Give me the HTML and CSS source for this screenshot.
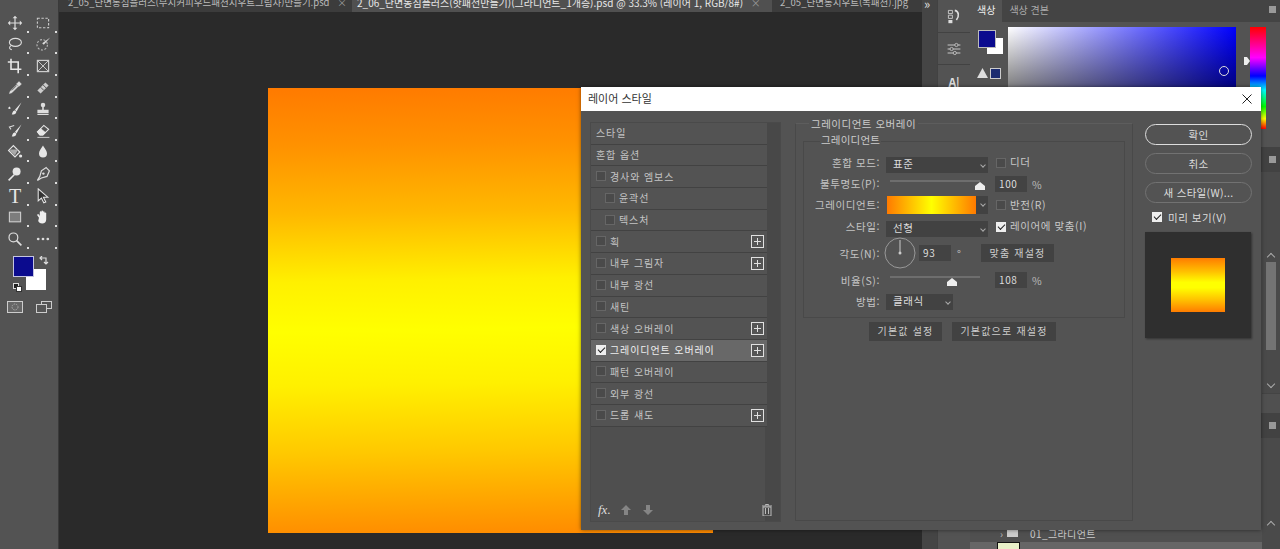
FILE: index.html
```html
<!DOCTYPE html>
<html lang="ko">
<head>
<meta charset="utf-8">
<title>레이어 스타일</title>
<link rel="stylesheet" href="styles.css">
</head>
<body>
<div class="app">
  <aside class="tools">
    <div class="tool-grid">
      <span class="tool"><svg class="ic" viewBox="0 0 20 20"><path d="M10 3v14M3 10h14" stroke="#ddd" stroke-width="1.500"/><path d="M10 1l-3 3h6zM10 19l-3-3h6zM1 10l3-3v6zM19 10l-3-3v6z" fill="#ddd"/></svg></span>
      <span class="tool"><svg class="ic" viewBox="0 0 20 20"><rect x="3" y="4" width="14" height="12" fill="none" stroke="#ccc" stroke-width="1.400" stroke-dasharray="3 2"/></svg></span>
      <span class="tool"><svg class="ic" viewBox="0 0 20 20"><ellipse cx="10.500" cy="8" rx="7.500" ry="5" fill="none" stroke="#ddd" stroke-width="1.400"/><path d="M5 12c-3 2-2 5 1 5" fill="none" stroke="#ddd" stroke-width="1.400"/></svg></span>
      <span class="tool"><svg class="ic" viewBox="0 0 20 20"><circle cx="9" cy="11" r="6.500" fill="none" stroke="#bbb" stroke-width="1.400" stroke-dasharray="2.500 2"/><path d="M19 2l-8 9-2-2z" fill="#ddd"/></svg></span>
      <span class="tool"><svg class="ic" viewBox="0 0 20 20"><path d="M5 1v13h13M1 5h13v14" fill="none" stroke="#e6e6e6" stroke-width="2"/></svg></span>
      <span class="tool"><svg class="ic" viewBox="0 0 20 20"><rect x="3" y="3" width="14" height="14" fill="none" stroke="#ccc" stroke-width="1.500"/><path d="M3 3l14 14M17 3L3 17" stroke="#ccc" stroke-width="1.200"/></svg></span>
      <span class="tool"><svg class="ic" viewBox="0 0 20 20"><path d="M15 2l3 3-3 3-3-3zM12 6l2 2-8 8-3 1 1-3z" fill="#ddd" stroke="#ddd" stroke-width=".6"/><path d="M6 13l6-6" stroke="#555"/></svg></span>
      <span class="tool"><svg class="ic" viewBox="0 0 20 20"><path d="M3 13L13 3l4 4L7 17z" fill="#ccc"/><path d="M7 9l4 4M10 6l4 4" stroke="#555" stroke-width="1.200"/></svg></span>
      <span class="tool"><svg class="ic" viewBox="0 0 20 20"><path d="M18 2l-8 9 2 2zM10 12c-3 0-3 3-4 5 3 0 6-1 5.500-4z" fill="#e6e6e6"/><path d="M3 7c-2 2-2 3 0 3s2-1 0-3z" fill="#e6e6e6"/></svg></span>
      <span class="tool"><svg class="ic" viewBox="0 0 20 20"><circle cx="10" cy="5" r="2.800" fill="#ddd"/><path d="M9 7h2v4H9zM3 11h14v4H3zM3 16h14v1.500H3z" fill="#ddd"/></svg></span>
      <span class="tool"><svg class="ic" viewBox="0 0 20 20"><path d="M18 2l-8 9 2 2zM10 12c-3 0-3 3-4 5 3 0 6-1 5.500-4z" fill="#e6e6e6"/><path d="M9 3L3 5l2 3" fill="none" stroke="#ddd" stroke-width="1.300"/></svg></span>
      <span class="tool"><svg class="ic" viewBox="0 0 20 20"><path d="M3 11l8-8 6 5-7 7H6z" fill="none" stroke="#e6e6e6" stroke-width="1.400"/><path d="M3 11l4-4 6 5-3 3H6zM3 18h15" fill="#e6e6e6" stroke="#e6e6e6"/></svg></span>
      <span class="tool"><svg class="ic" viewBox="0 0 20 20"><path d="M8 2l8 8-6 6-8-8z" fill="none" stroke="#e6e6e6" stroke-width="1.500"/><path d="M4 7h10l-4 7-6-5z" fill="#aaa"/><circle cx="17" cy="15" r="2" fill="#e6e6e6"/></svg></span>
      <span class="tool"><svg class="ic" viewBox="0 0 20 20"><path d="M10 2c3 5 5 7 5 10a5 5 0 0 1-10 0c0-3 2-5 5-10z" fill="#e6e6e6"/></svg></span>
      <span class="tool"><svg class="ic" viewBox="0 0 20 20"><circle cx="12" cy="7" r="5" fill="#e6e6e6"/><path d="M9 11l-7 7" stroke="#e6e6e6" stroke-width="2"/></svg></span>
      <span class="tool"><svg class="ic" viewBox="0 0 20 20"><path d="M14 2l4 4-3 7-7 2-5 3 3-5 2-7z" fill="none" stroke="#ddd" stroke-width="1.500"/><circle cx="10.500" cy="9.500" r="1.500" fill="#ddd"/></svg></span>
      <span class="tool type-tool">T</span>
      <span class="tool"><svg class="ic" viewBox="0 0 20 20"><path d="M4 1v15l4-3.500 3 6 2.500-1-3-6H16z" fill="#333" stroke="#e6e6e6" stroke-width="1.300"/></svg></span>
      <span class="tool"><svg class="ic" viewBox="0 0 20 20"><rect x="3" y="4" width="14" height="12" fill="#7d7d7d" stroke="#ccc" stroke-width="1.400"/></svg></span>
      <span class="tool"><svg class="ic" viewBox="0 0 20 20"><path d="M5 11L3 8c-1-1 1-2 2-1l1 2V4c0-1.500 2-1.500 2 0V3c0-1.500 2-1.500 2 0v1c0-1.500 2-1.500 2 0v1c0-1 2-1 2 0v8c0 3-2 5-5 5s-4-1-5-3z" fill="#eee"/></svg></span>
      <span class="tool"><svg class="ic" viewBox="0 0 20 20"><circle cx="8" cy="8" r="5.500" fill="none" stroke="#ddd" stroke-width="1.500"/><path d="M12 12l6 6" stroke="#ddd" stroke-width="2"/></svg></span>
      <span class="tool"><svg class="ic" viewBox="0 0 20 20"><circle cx="4" cy="10" r="1.700" fill="#ddd"/><circle cx="10" cy="10" r="1.700" fill="#ddd"/><circle cx="16" cy="10" r="1.700" fill="#ddd"/></svg></span>
    </div>
    <div class="colors">
      <span class="bg-chip"></span>
      <span class="fg-chip"></span>
      <svg class="swap" viewBox="0 0 10 10"><path d="M1 2h6v6M3 0L1 2l2 2M5 6l2 2 2-2" fill="none" stroke="#ddd" stroke-width="1.200"/></svg>
      <span class="mini-back"></span>
      <span class="mini-front"></span>
    </div>
    <div class="tool-foot">
      <svg class="foot-ic" viewBox="0 0 16 12"><rect x=".5" y=".5" width="15" height="11" fill="#666" stroke="#ccc"/><circle cx="8" cy="6" r="3" fill="none" stroke="#aaa" stroke-dasharray="1.500 1"/></svg>
      <svg class="foot-ic" viewBox="0 0 16 12"><rect x="5.500" y=".5" width="10" height="7" fill="none" stroke="#ccc"/><rect x=".5" y="3.500" width="10" height="8" fill="#555" stroke="#ccc"/></svg>
    </div>
  </aside>

  <main class="doc">
    <div class="tabs">
      <span class="tab tab-one">2_05_단면동심플러스(무지커피우드패션지우트그림자)만들기.psd <i>×</i></span>
      <span class="tab tab-active">2_06_단면동심플러스(핫패션만들기)(그라디언트_1개층).psd @ 33.3% (레이어 1, RGB/8#) <i>×</i></span>
      <span class="tab tab-three">2_05_단면동지우트(녹패션).jpg</span>
    </div>
    <div class="stage"><div class="canvas"></div></div>
  </main>

  <aside class="dock">
    <div class="gutter"><span class="tab-more">»</span></div>
    <div class="strip">
      <div class="strip-cell">
        <svg class="strip-ic" viewBox="0 0 20 20"><path d="M3 3h5v4H3zM3 9h5v4H3z" fill="none" stroke="#ddd"/><path d="M3 15h5v4H3z" fill="#ddd"/><path d="M11 3c5 1 6 7 2 12" fill="none" stroke="#ddd" stroke-width="2"/></svg>
      </div>
      <div class="strip-cell">
        <svg class="strip-ic" viewBox="0 0 20 20"><path d="M2 5h16M2 10h16M2 15h16" stroke="#ccc" stroke-width="1.200"/><circle cx="13" cy="5" r="2" fill="#555" stroke="#ccc"/><circle cx="7" cy="10" r="2" fill="#555" stroke="#ccc"/><circle cx="11" cy="15" r="2" fill="#555" stroke="#ccc"/></svg>
      </div>
      <div class="strip-cell strip-text">A|</div>
    </div>
    <div class="panels">
      <section class="color-panel">
        <div class="panel-tabs">
          <span class="ptab ptab-on">색상</span>
          <span class="ptab">색상 견본</span>
          <span class="grip"></span>
        </div>
        <div class="color-body">
          <div class="swatches">
            <span class="sw-bg"></span>
            <span class="sw-fg"></span>
            <svg class="warn" viewBox="0 0 12 11"><path d="M6 0l6 11H0z" fill="#ddd"/></svg>
            <span class="sw-web"></span>
          </div>
          <div class="picker"><span class="picker-dot"></span></div>
          <svg class="hue-arrow" viewBox="0 0 6 8"><path d="M0 0h3l3 4-3 4H0z" fill="#eee"/></svg>
          <div class="hue"></div>
        </div>
      </section>
      <section class="band"><span class="grip"></span></section>
      <section class="upper">
        <div class="upper-scroll">
          <span class="chevron chevron-up"></span>
          <span class="vthumb"></span>
          <span class="chevron chevron-down"></span>
        </div>
      </section>
      <section class="band"><span class="grip"></span></section>
      <section class="lower">
        <div class="layer-list">
          <div class="layer-row"><span class="chev">›</span><span class="folder"></span><span>01_그라디언트</span></div>
          <div class="layer-next"><span class="layer-thumb"></span></div>
        </div>
        <div class="lower-scroll"><span class="chevron chevron-up"></span></div>
      </section>
    </div>
  </aside>
</div>

<div class="dialog">
  <header class="titlebar">
    <span>레이어 스타일</span>
    <svg class="close" viewBox="0 0 10 10"><path d="M.5.5l9 9M9.500.5l-9 9" stroke="#222" stroke-width="1"/></svg>
  </header>
  <div class="dlg-body">
    <div class="styles-col">
      <div class="style-list">
        <div class="row">스타일</div>
        <div class="row">혼합 옵션</div>
        <div class="row"><span class="cb"></span>경사와 엠보스</div>
        <div class="row sub"><span class="cb"></span>윤곽선</div>
        <div class="row sub"><span class="cb"></span>텍스처</div>
        <div class="row"><span class="cb"></span>획<span class="plus"></span></div>
        <div class="row"><span class="cb"></span>내부 그림자<span class="plus"></span></div>
        <div class="row"><span class="cb"></span>내부 광선</div>
        <div class="row"><span class="cb"></span>새틴</div>
        <div class="row"><span class="cb"></span>색상 오버레이<span class="plus"></span></div>
        <div class="row row-on"><span class="cb cb-on"></span>그레이디언트 오버레이<span class="plus"></span></div>
        <div class="row"><span class="cb"></span>패턴 오버레이</div>
        <div class="row"><span class="cb"></span>외부 광선</div>
        <div class="row"><span class="cb"></span>드롭 섀도<span class="plus"></span></div>
      </div>
      <div class="list-foot">
        <span class="fx">fx<b>.</b></span>
        <svg class="arrow" viewBox="0 0 10 10"><path d="M5 0l5 5H7v5H3V5H0z" fill="#858585"/></svg>
        <svg class="arrow" viewBox="0 0 10 10"><path d="M5 10l5-5H7V0H3v5H0z" fill="#858585"/></svg>
        <svg class="trash" viewBox="0 0 10 12"><path d="M3.500 1.500V.5h3v1M0 2h10M1 3h8v9H1z" fill="none" stroke="#bbb"/><path d="M3.500 4v6M6.500 4v6" stroke="#bbb"/></svg>
      </div>
    </div>

    <div class="settings">
      <div class="head">그레이디언트 오버레이</div>
      <div class="group">
        <div class="legend">그레이디언트</div>
        <div class="f f1">
          <label>혼합 모드:</label>
          <div class="sel sel-wide">표준<em></em></div>
          <span class="cb cb-form"></span><span class="chk-label">디더</span>
        </div>
        <div class="f f2">
          <label>불투명도(P):</label>
          <div class="slider"><span class="thumb thumb-full"></span></div>
          <div class="num">100</div><span class="unit">%</span>
        </div>
        <div class="f f3">
          <label>그레이디언트:</label>
          <div class="grad-pick"><span class="grad"></span><span class="grad-btn"><em></em></span></div>
          <span class="cb cb-form"></span><span class="chk-label">반전(R)</span>
        </div>
        <div class="f f4">
          <label>스타일:</label>
          <div class="sel sel-wide">선형<em></em></div>
          <span class="cb cb-form cb-on"></span><span class="chk-label">레이어에 맞춤(I)</span>
        </div>
        <div class="f f5">
          <label>각도(N):</label>
          <svg class="dial" viewBox="0 0 32 32"><circle cx="16" cy="16" r="15" fill="none" stroke="#999"/><path d="M16 16V3" stroke="#ccc"/><circle cx="16" cy="16" r="1.500" fill="#ccc"/></svg>
          <div class="num num-angle">93</div><span class="deg">°</span>
          <div class="btn btn-fit">맞춤 재설정</div>
        </div>
        <div class="f f6">
          <label>비율(S):</label>
          <div class="slider"><span class="thumb thumb-scale"></span></div>
          <div class="num">108</div><span class="unit">%</span>
        </div>
        <div class="f f7">
          <label>방법:</label>
          <div class="sel sel-narrow">클래식<em></em></div>
        </div>
      </div>
      <div class="defaults">
        <div class="btn btn-a">기본값 설정</div>
        <div class="btn btn-b">기본값으로 재설정</div>
      </div>
    </div>

    <div class="actions">
      <div class="pill pill-main">확인</div>
      <div class="pill">취소</div>
      <div class="pill pill-last">새 스타일(W)...</div>
      <div class="preview-check"><span class="cb cb-on"></span>미리 보기(V)</div>
      <div class="preview"><span class="preview-swatch"></span></div>
    </div>
  </div>
</div>
</body>
</html>
```
FILE: styles.css
```css
* { box-sizing: border-box; }
html, body { margin: 0; height: 100%; overflow: hidden; }
body {
  background: #2a2a2a;
  color: #d8d8d8;
  font: 11px "Noto Sans CJK KR", "Noto Sans", sans-serif;
}
.app { display: flex; height: 549px; width: 1280px; }

/* Toolbar */
.tools { width: 59px; flex: none; background: #535353; border-right: 1px solid #3a3a3a; padding-top: 12px; }
.tool-grid { display: grid; grid-template-columns: 28px 28px; grid-auto-rows: 21.6px; justify-items: center; align-items: center; padding-left: 1px; }
.tool { position: relative; display: block; width: 16px; height: 16px; }
.tool::after { content: ""; position: absolute; right: -6px; bottom: -2px; width: 2px; height: 2px; background: #ddd; }
.ic { width: 16px; height: 16px; display: block; }
.type-tool { font: 20px/16px "Liberation Serif", serif; color: #e6e6e6; text-align: center; }
.colors { position: relative; height: 45px; margin-top: 6.4px; }
.bg-chip { position: absolute; left: 26px; top: 13px; width: 20px; height: 21px; background: #fff; }
.fg-chip { position: absolute; left: 13px; top: 0; width: 21px; height: 21px; background: #0b0b8e; border: 1px solid #c4c4e0; }
.swap { position: absolute; left: 39px; top: 0; width: 10px; height: 10px; }
.mini-back { position: absolute; left: 13px; top: 27px; width: 6px; height: 6px; background: #222; border: 1px solid #ddd; }
.mini-front { position: absolute; left: 16px; top: 30px; width: 6px; height: 6px; background: #fff; border: 1px solid #333; }
.tool-foot { display: flex; gap: 13px; padding-left: 7px; }
.foot-ic { width: 16px; height: 12px; display: block; }

/* Document */
.doc { width: 863px; flex: none; display: flex; flex-direction: column; background: #2a2a2a; }
.tabs { height: 19px; margin-top: -7px; display: flex; background: #3c3c3c; white-space: nowrap; overflow: hidden; font-size: 9.500px; line-height: 19px; color: #bbb; flex: none; }
.tab { height: 19px; overflow: hidden; flex: none; padding-left: 9px; }
.tab-one { width: 293px; }
.tab-active { width: 420px; background: #505050; color: #e8e8e8; padding-left: 5px; font-size: 10px; }
.tab-three { width: 150px; padding-left: 8px; }
.tab i { font-style: normal; color: #999; margin-left: 5px; }
.stage { flex: 1; padding: 76px 0 0 209px; }
.canvas { width: 445px; height: 445px; background: linear-gradient(179deg, #ff7a00 0%, #ff9200 13%, #ffb800 28%, #fff000 43%, #ffff00 54%, #fff000 66%, #ffc800 81%, #ff9a00 95%, #ff8a00 100%); }

/* Dock */
.dock { flex: 1; display: flex; background: #454545; }
.gutter { width: 15px; flex: none; }
.tab-more { display: block; color: #ddd; font-size: 13px; line-height: 8px; padding-left: 2px; }
.strip { width: 33px; flex: none; background: #535353; border-left: 1px solid #424242; }
.strip-cell { height: 32px; display: flex; align-items: center; justify-content: center; border-bottom: 1px solid #424242; }
.strip-cell:first-child { height: 33px; }
.strip-ic { width: 16px; height: 16px; }
.strip-text { color: #ddd; font-size: 12px; font-weight: bold; border: 0; }
.panels { flex: 1; display: flex; flex-direction: column; background: #424242; }
.color-panel { height: 147px; background: #535353; flex: none; }
.panel-tabs { height: 22px; display: flex; background: #444; align-items: center; position: relative; }
.ptab { padding: 0 7px; height: 22px; line-height: 20px; color: #aaa; font-size: 10px; }
.ptab-on { background: #535353; color: #eee; }
.grip { position: absolute; right: 4px; top: 6px; width: 7px; height: 7px; background: #999; }
.color-body { position: relative; height: 125px; }
.swatches { position: absolute; left: 0; top: 0; width: 36px; height: 66px; }
.sw-bg { position: absolute; left: 17px; top: 16px; width: 16px; height: 16px; background: #fff; }
.sw-fg { position: absolute; left: 8px; top: 8px; width: 18px; height: 18px; background: #0b0b8e; border: 1px solid #bbb; }
.warn { position: absolute; left: 7px; top: 46px; width: 11px; height: 10px; }
.sw-web { position: absolute; left: 20px; top: 46px; width: 11px; height: 11px; background: #1c2c70; border: 1px solid #ccc; }
.picker { position: absolute; left: 38px; top: 5px; width: 228px; height: 120px; background: linear-gradient(to bottom, transparent, #000), linear-gradient(to right, #fff, #0000ff); }
.picker-dot { position: absolute; left: 211px; top: 39px; width: 10px; height: 10px; border: 1px solid #ddd; border-radius: 50%; }
.hue-arrow { position: absolute; left: 274px; top: 35px; width: 6px; height: 8px; }
.hue { position: absolute; left: 280px; top: 5px; width: 16px; height: 102px; background: linear-gradient(to bottom, #f00, #f0f 30%, #00f 48%, #0ff 62%, #0f0 78%, #ff0 90%, #f00); }
.band { height: 25px; flex: none; background: #424242; position: relative; }
.band .grip { top: 9px; }
.upper { height: 241px; flex: none; background: #505050; display: flex; justify-content: flex-end; }
.upper-scroll { width: 18px; height: 222px; border-bottom: 1px solid #444; background: #4a4a4a; padding-top: 80px; display: flex; flex-direction: column; align-items: center; }
.vthumb { width: 10px; height: 88px; flex: none; background: #747474; margin-top: 2px; }
.chevron { width: 6px; height: 6px; flex: none; border-left: 1px solid #aaa; border-top: 1px solid #aaa; }
.chevron-up { transform: rotate(45deg); margin-top: 2px; }
.chevron-down { transform: rotate(225deg); margin-top: 31px; }
.lower { flex: 1; background: #505050; display: flex; }
.layer-list { flex: 1; padding-top: 86px; }
.layer-row { display: flex; align-items: center; height: 18px; font-size: 10px; padding-left: 30px; color: #ccc; letter-spacing: .4px; }
.chev { color: #bbb; width: 7px; }
.folder { width: 11px; height: 8px; background: #ccc; margin-right: 12px; }
.layer-next { height: 20px; background: #666; padding-left: 27px; }
.layer-thumb { display: block; width: 23px; height: 20px; background: #e8f0c8; border: 1px solid #111; }
.lower-scroll { width: 18px; flex: none; background: #4a4a4a; padding-top: 82px; display: flex; justify-content: center; }

/* Dialog */
.dialog { position: absolute; left: 581px; top: 87px; width: 680px; height: 443px; background: #535353; box-shadow: 0 0 4px rgba(0,0,0,.5); }
.titlebar { height: 24px; background: #fff; color: #333; font-size: 11px; line-height: 20px; display: flex; align-items: center; justify-content: space-between; padding: 0 9px 2px 7px; }
.close { width: 10px; height: 10px; display: block; margin-top: 2px; }
.dlg-body { display: flex; padding: 11px 9px 8px 9px; height: 419px; }
.styles-col { width: 191px; flex: none; border: 1px solid #4a4a4a; display: flex; flex-direction: column; background: #4f4f4f linear-gradient(to left, #484848 15px, transparent 15px); }
.style-list { width: 176px; flex: 1; }
.row { height: 21.7px; display: flex; align-items: center; padding: 0 0 1px 5px; border-bottom: 1px solid #424242; background: #535353; font-size: 10px; letter-spacing: .9px; color: #c4c4c4; position: relative; }
.sub { padding-left: 14px; }
.row-on { background: #686868; color: #eee; }
.cb { width: 10px; height: 10px; flex: none; background: #4a4a4a; border: 1px solid #666; margin-right: 4px; position: relative; }
.cb-on { background: #eee; border-color: #eee; }
.cb-on::after { content: ""; position: absolute; left: 1px; top: 1px; width: 6px; height: 3px; border-left: 1.500px solid #222; border-bottom: 1.500px solid #222; transform: rotate(-45deg); }
.plus { position: absolute; right: 3px; top: 4px; width: 13px; height: 13px; border: 1px solid #e0e0e0; background: linear-gradient(#e0e0e0, #e0e0e0) center / 7px 1px no-repeat, linear-gradient(#e0e0e0, #e0e0e0) center / 1px 7px no-repeat, #555; }
.list-foot { height: 22px; display: flex; align-items: center; padding: 0 8px 0 7px; flex: none; }
.fx { font: italic 13px "Liberation Serif", serif; color: #ddd; width: 23px; }
.fx b { font-weight: normal; }
.arrow { width: 10px; height: 10px; margin-right: 12px; }
.trash { width: 10px; height: 12px; margin-left: auto; }

.settings { width: 338px; flex: none; margin: 1px 0 1px 14px; border: 1px solid #494949; border-top-color: #5d5d5d; padding: 0 7px; }
.head { height: 14px; font-size: 10.500px; line-height: 12px; margin: -6px 0 0 6px; letter-spacing: .5px; background: #535353; width: fit-content; padding: 0 2px; color: #ccc; }
.group { height: 177px; margin-top: 9px; border: 1px solid #494949; padding-top: 13px; position: relative; }
.legend { position: absolute; left: 16px; top: -9px; font-size: 10.500px; line-height: 13px; letter-spacing: .2px; background: #535353; color: #ccc; padding: 0 1px; }
.f { display: flex; align-items: center; font-size: 10.500px; letter-spacing: .6px; color: #c8c8c8; white-space: nowrap; }
.f label { width: 76px; flex: none; text-align: right; margin-right: 6px; color: #c4c4c4; padding-bottom: 2px; }
.f1 { height: 20px; } .f2 { height: 18px; } .f3 { height: 24px; } .f4 { height: 24px; } .f5 { height: 24px; } .f6 { height: 30px; } .f7 { height: 14px; }
.f1 label, .f4 label { padding-bottom: 5px; }
.f5 label, .f6 label { padding-bottom: 0; }
.f1 .cb-form, .f4 .cb-form { margin-bottom: 4px; }
.f1 .chk-label, .f4 .chk-label { margin-bottom: 6px; }
.chk-label { padding-bottom: 1px; }
.sel { height: 16px; background: #424242; display: flex; align-items: center; padding: 0 0 3px 7px; position: relative; color: #ddd; flex: none; }
.sel-wide { width: 102px; margin-right: 8px; }
.sel-narrow { width: 67px; }
.sel em, .grad-btn em { position: absolute; right: 3px; top: 6px; width: 4px; height: 4px; border-right: 1px solid #aaa; border-bottom: 1px solid #aaa; transform: rotate(45deg); }
.slider { width: 90px; height: 2px; margin: 0 11px 6px 4px; background: #6e6e6e; position: relative; flex: none; }
.thumb { position: absolute; top: 2px; width: 10px; height: 8px; background: #eee; clip-path: polygon(50% 0, 100% 50%, 100% 100%, 0 100%, 0 50%); }
.thumb-full { left: 85px; }
.thumb-scale { left: 57px; }
.num { width: 32px; height: 16px; background: #434343; color: #ddd; padding-left: 4px; line-height: 15px; margin: 0 5px 0 4px; font-size: 10px; flex: none; }
.unit { color: #bbb; }
.grad-pick { display: flex; width: 101px; height: 18px; margin: 0 8px 0 1px; flex: none; }
.grad { width: 89px; height: 18px; background: linear-gradient(to right, #ff7a00, #ffff00 50%, #ff7a00); }
.grad-btn { width: 12px; background: #424242; position: relative; }
.dial { width: 32px; height: 32px; flex: none; margin-left: -2px; }
.num-angle { margin: 0 5px 0 3px; }
.deg { width: 24px; margin-left: 1px; }
.btn { height: 18px; background: #424242; display: flex; align-items: center; justify-content: center; font-size: 10px; letter-spacing: 1.200px; color: #ccc; flex: none; padding-bottom: 2px; }
.btn-fit { width: 73px; }
.defaults { display: flex; gap: 10px; margin: 4px 0 0 66px; }
.btn-a { width: 73px; height: 19px; }
.btn-b { width: 104px; height: 19px; }

.actions { width: 107px; margin: 2px 0 0 12px; flex: none; }
.pill { height: 21px; border: 1px solid #727272; border-radius: 11px; display: flex; align-items: center; justify-content: center; font-size: 10.500px; letter-spacing: .3px; color: #ddd; margin-bottom: 8px; padding-bottom: 1px; }
.pill-main { border-color: #ddd; }
.pill-last { margin-bottom: 7px; }
.preview-check { display: flex; align-items: center; font-size: 10.500px; letter-spacing: .5px; padding-left: 7px; color: #ddd; height: 14px; }
.preview-check .cb { margin-right: 6px; }
.preview { margin-top: 8px; width: 106px; height: 106px; background: #2f2f2f; display: flex; align-items: center; justify-content: center; box-shadow: 1px 1px 2px rgba(0,0,0,.4); }
.preview-swatch { width: 54px; height: 54px; background: linear-gradient(180deg, #ff7c00 0%, #ffc000 25%, #ffff00 45%, #ffff00 55%, #ffc000 78%, #ff7c00 100%); }
```
